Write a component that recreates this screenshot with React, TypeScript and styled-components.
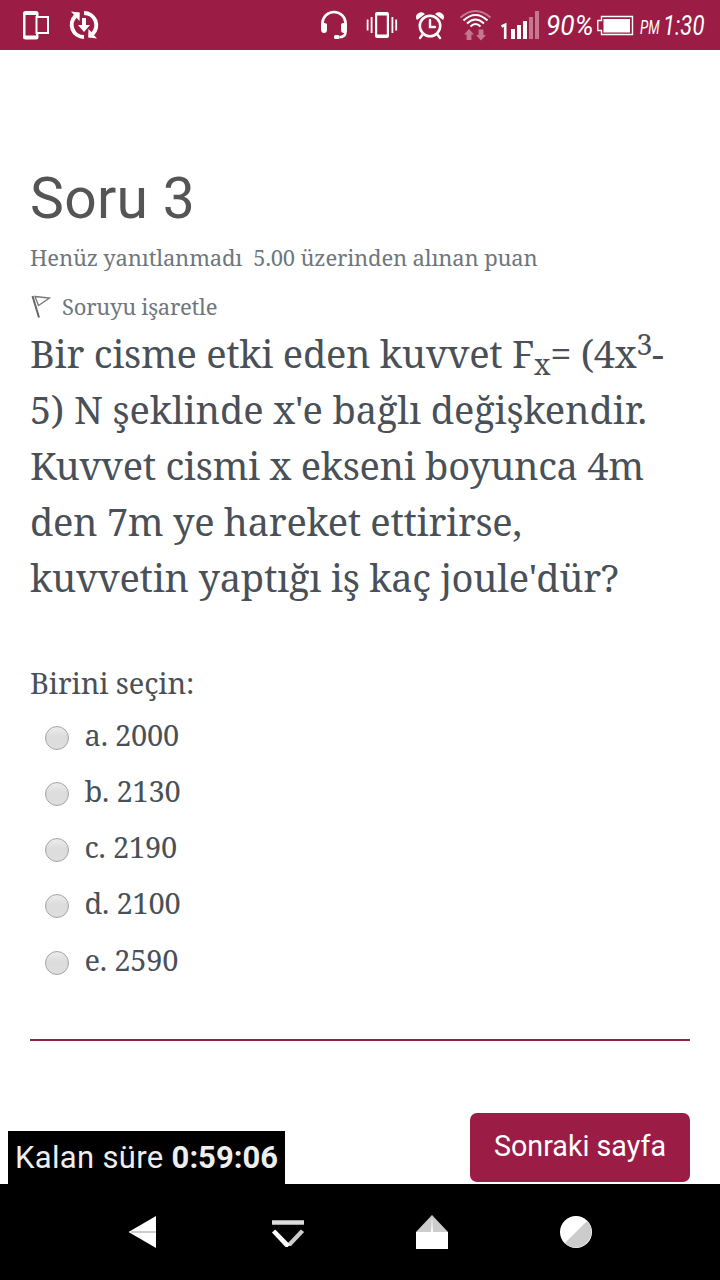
import React from "react";
import styled, { createGlobalStyle } from "styled-components";

const crimson = "#9b1d46";
const serif = `"Noto Serif", "DejaVu Serif Condensed", "DejaVu Serif", serif`;

const GlobalStyle = createGlobalStyle`
  * { box-sizing: border-box; }
  body { margin: 0; background: #fff; }
`;

const Screen = styled.div`
  width: 720px;
  height: 1280px;
  display: flex;
  flex-direction: column;
  background: #fff;
  overflow: hidden;
  font-family: Roboto, sans-serif;
`;

const StatusBar = styled.header`
  height: 50px;
  flex: none;
  display: flex;
  align-items: center;
  background: ${crimson};
  color: #fff;
`;

const StatusIcon = styled.svg<{ $before: number }>`
  display: block;
  flex: none;
  height: 50px;
  margin-left: ${(p) => p.$before}px;
`;

const StatusText = styled.span<{ $width: number; $before: number; $size: number; $squeeze: number; $drop?: number }>`
  flex: none;
  width: ${(p) => p.$width}px;
  margin-left: ${(p) => p.$before}px;
  padding-top: ${(p) => p.$drop ?? 0}px;
  font: italic 400 ${(p) => p.$size}px/50px Roboto, sans-serif;
  height: 50px;
  white-space: nowrap;
  transform: scaleX(${(p) => p.$squeeze});
  transform-origin: left center;
`;

const Main = styled.main`
  flex: 1;
  display: flex;
  flex-direction: column;
  padding: 112px 30px 0;
  color: #495057;
  font-family: ${serif};
`;

const Title = styled.h1`
  margin: 0;
  height: 71px;
  font: 400 57px/73px Roboto, sans-serif;
  letter-spacing: 0.3px;
  color: #555;
`;

const Meta = styled.div<{ $spacing: number }>`
  display: flex;
  align-items: center;
  height: 49px;
  font-size: 22px;
  line-height: 49px;
  letter-spacing: ${(p) => p.$spacing}px;
  color: #6f777e;
  white-space: pre;
`;

const Flag = styled.svg`
  margin-right: 11px;
  flex: none;
`;

const Question = styled.p`
  margin: -6px 0 0;
  font-size: 38px;
  line-height: 56px;
`;

const Line = styled.span<{ $spacing: number }>`
  display: block;
  height: 56px;
  white-space: nowrap;
  letter-spacing: ${(p) => p.$spacing}px;

  sub, sup {
    font-size: 28.5px;
    line-height: 0;
    position: relative;
    vertical-align: baseline;
  }
  sub { bottom: -0.25em; }
  sup { top: -0.46em; }
`;

const Prompt = styled.div`
  margin-top: 56px;
  height: 44px;
  font-size: 29px;
  line-height: 44px;
  letter-spacing: -0.12px;
`;

const Answers = styled.div`
  display: flex;
  flex-direction: column;
  margin-top: 1.4px;
  padding-left: 15px;
`;

const Answer = styled.label`
  display: flex;
  align-items: center;
  height: 56.3px;
  font-size: 29px;
  letter-spacing: -0.2px;
  padding-bottom: 1px;
`;

const Radio = styled.span`
  width: 24px;
  height: 24px;
  margin: 7px 15.5px 0 0;
  flex: none;
  border: 1px solid #a4a4a4;
  border-radius: 50%;
  background: linear-gradient(#ececec, #dcdcdc 45%, #dedede);
`;

const Divider = styled.hr`
  width: 100%;
  margin: 51.6px 0 0;
  border: 0;
  height: 2px;
  flex: none;
  background: #8d2449;
`;

const Footer = styled.div`
  margin: auto -30px 0 -22px;
  display: flex;
  justify-content: space-between;
  align-items: flex-end;
  padding-right: 30px;
  font-family: Roboto, sans-serif;
`;

const Timer = styled.div`
  width: 277px;
  height: 53px;
  padding-left: 7px;
  background: #000;
  color: #eee;
  font-size: 31px;
  line-height: 53px;
  letter-spacing: 0.33px;
  white-space: nowrap;

  b { letter-spacing: 0; }
`;

const NextButton = styled.button`
  width: 220px;
  height: 69px;
  margin-bottom: 2px;
  padding: 0 0 3px;
  border: 0;
  border-radius: 7px;
  background: ${crimson};
  color: #fff;
  font: 400 28.7px/1 Roboto, sans-serif;
`;

const NavBar = styled.nav`
  height: 96px;
  flex: none;
  display: flex;
  justify-content: center;
  align-items: center;
  gap: 104px;
  background: #000;
`;

const answers = ["a. 2000", "b. 2130", "c. 2190", "d. 2100", "e. 2590"];

export default function App() {
  return (
    <Screen>
      <GlobalStyle />
      <StatusBar>
        <StatusIcon $before={22} width="28" viewBox="22 0 28 50">
          <path fillRule="evenodd" fill="#fff" d="M25.500 11h10.500q2.500 0 2.500 2.500V16h-2.500V15H25.500V35.500H36V34h2.500v3q0 2.500-2.500 2.500H25.500q-2.500 0-2.500-2.500V13.500Q23 11 25.500 11Z" />
          <path d="M36.500 17H48V33H36.500Z" fill="none" stroke="#fff" strokeWidth="2" />
        </StatusIcon>
        <StatusIcon $before={19} width="30" viewBox="69 0 30 50">
          <g fill="none" stroke="#fff" strokeWidth="4">
            <path d="M84 37A12.200 12.200 0 0 1 75.500 16" />
            <path d="M84 13A12.200 12.200 0 0 1 92.500 34" />
          </g>
          <path fill="#fff" d="M71 11.500L79.800 12.500 79.500 21ZM97 38.500L88.200 37.500 88.500 29ZM82 18h4v7h4l-6 7-6-7h4Z" />
        </StatusIcon>
        <StatusIcon $before={221} width="28" viewBox="320 0 28 50">
          <path d="M322.500 25v-2a11.500 11 0 0 1 23 0v9q0 5-6 5.200" fill="none" stroke="#fff" strokeWidth="2.600" />
          <path fill="#fff" d="M321 23.500q6-1.500 6 1v5.500q0 3-3 3-3 0-3-4ZM347 23.500q-6-1.500-6 1v5.500q0 3 3 3 3 0 3-4Z" />
          <rect x="334" y="35" width="5.500" height="4" rx="1.500" fill="#fff" />
        </StatusIcon>
        <StatusIcon $before={18} width="32" viewBox="366 0 32 50">
          <path fillRule="evenodd" fill="#fff" d="M377 12h10q2 0 2 2v22q0 2-2 2H377q-2 0-2-2V14q0-2 2-2ZM377.200 15.500V34.500H386.800V15.500Z" />
          <path d="M367.600 19.500v11M371.600 17v16M392.400 17v16M396.200 19.500v11" stroke="#fff" strokeWidth="1.800" />
        </StatusIcon>
        <StatusIcon $before={17} width="30" viewBox="415 0 30 50">
          <circle cx="430" cy="26" r="10.200" fill="none" stroke="#fff" strokeWidth="2.600" />
          <path d="M430 20v7h5M423 34l-3 4M437 34l3 4" fill="none" stroke="#fff" strokeWidth="2.400" strokeLinecap="round" />
          <path fill="#fff" d="M417 20q-2.500-4 1-6.500 4-2.500 7 .5ZM443 20q2.500-4-1-6.500-4-2.500-7 .5Z" />
        </StatusIcon>
        <StatusIcon $before={14} width="33" viewBox="459 0 33 50">
          <g fill="none" stroke="#fff" strokeWidth="2">
            <path d="M460.500 17.500q15-13 30 0" opacity=".4" />
            <path d="M463.500 20.500q12-11 24 0M467 23.500q8.500-8 17 0M470.500 26.500q5-5 10 0" />
          </g>
          <path fill="#fff" opacity=".4" d="M464 34.500l5-5.500 5 5.500h-2.600v5.500h-4.800v-5.500ZM476 35h2.600v-5.500h4.800v5.500h2.600l-5 5.500Z" />
        </StatusIcon>
        <StatusIcon $before={8} width="40" viewBox="500 0 40 50">
          <path d="M501.500 26.500L505.200 24.800V39" fill="none" stroke="#fff" strokeWidth="2.600" />
          <path fill="#fff" d="M511 29h4v10h-4ZM517 25h4v14h-4ZM523 21h4v18h-4Z" />
          <path fill="#fff" opacity=".4" d="M529 17h4v22h-4ZM535 11h4v28h-4Z" />
        </StatusIcon>
        <StatusText $before={6} $width={47} $size={28} $squeeze={0.94} $drop={1}>90%</StatusText>
        <StatusIcon $before={4} width="37" viewBox="597 0 37 50">
          <path d="M601.500 16.500H632.500V34.500H601.500V30.500H597.800V20.500H601.500Z" fill="none" stroke="#fff" strokeWidth="1.400" />
          <path fill="#fff" d="M603.500 19H630V32.500H603.500Z" />
        </StatusIcon>
        <StatusText $before={6} $width={24} $size={20} $squeeze={0.67} $drop={2}>PM</StatusText>
        <StatusText $before={-1} $width={45} $size={28} $squeeze={0.79} $drop={1}>1:30</StatusText>
      </StatusBar>

      <Main>
        <Title>Soru 3</Title>
        <Meta $spacing={-0.17}>{"Henüz yanıtlanmadı  5.00 üzerinden alınan puan"}</Meta>
        <Meta $spacing={-0.25}>
          <Flag width="21" height="24" viewBox="0 0 21 24" fill="none">
            <path d="M2.500 1L9 22.500" stroke="#666" strokeWidth="2" />
            <path d="M5 1.500L19.500 3 8.500 10.500Z" stroke="#777" strokeWidth="1.300" />
          </Flag>
          Soruyu işaretle
        </Meta>
        <Question>
          <Line $spacing={-0.27}>Bir cisme etki eden kuvvet F<sub>x</sub>= (4x<sup>3</sup>-</Line>
          <Line $spacing={-0.12}>5) N şeklinde x'e bağlı değişkendir.</Line>
          <Line $spacing={-0.31}>Kuvvet cismi x ekseni boyunca 4m</Line>
          <Line $spacing={-0.29}>den 7m ye hareket ettirirse,</Line>
          <Line $spacing={-0.24}>kuvvetin yaptığı iş kaç joule'dür?</Line>
        </Question>
        <Prompt>Birini seçin:</Prompt>
        <Answers>
          {answers.map((a) => (
            <Answer key={a}>
              <Radio />
              {a}
            </Answer>
          ))}
        </Answers>
        <Divider />
        <Footer>
          <Timer>Kalan süre <b>0:59:06</b></Timer>
          <NextButton>Sonraki sayfa</NextButton>
        </Footer>
      </Main>

      <NavBar>
        <svg width="40" height="40" viewBox="0 0 40 40">
          <path d="M4.500 20L32 4V36Z" fill="#fff" />
          <path d="M7 20H32" stroke="#ccc" strokeWidth="2" />
        </svg>
        <svg width="40" height="40" viewBox="0 0 40 40" fill="none">
          <path d="M4 10.500H36" stroke="#ddd" strokeWidth="4.500" />
          <path d="M18.500 34L23 34 36.200 20 32.800 17.500 20 31Z" fill="#ccc" />
          <path d="M4 20.500L7.200 17.500 21.500 32 20 35H17.500Z" fill="#fff" />
        </svg>
        <svg width="40" height="40" viewBox="0 0 40 40">
          <path d="M4 20L20 3 36 20Z" fill="#ccc" />
          <path d="M4 20H36V37H4ZM20 5L21 20H19Z" fill="#fff" />
        </svg>
        <svg width="40" height="40" viewBox="0 0 40 40">
          <circle cx="20" cy="20" r="16" fill="#fff" />
          <path d="M31.300 8.700A16 16 0 0 1 8.700 31.300Z" fill="#ccc" />
        </svg>
      </NavBar>
    </Screen>
  );
}
